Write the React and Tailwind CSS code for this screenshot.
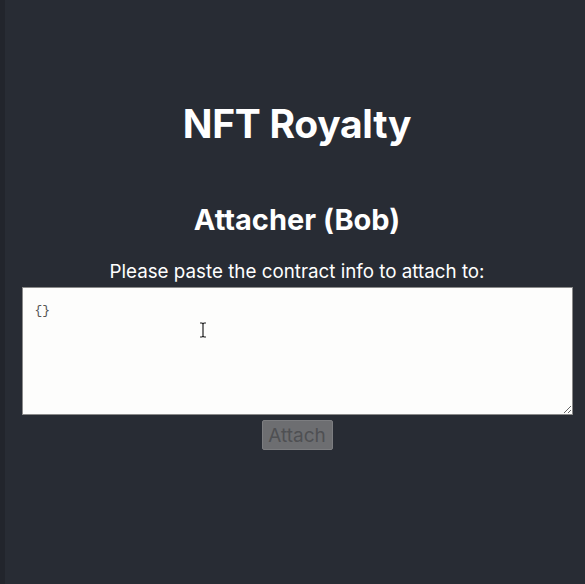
import React from 'react';

const App = () => {
  return (
    <div className="min-h-screen bg-[#282c34] text-white font-['Inter',sans-serif] relative">
      {/* left window edge */}
      <div className="absolute left-0 top-0 bottom-0 w-[5px] bg-[#22252c]" />
      <div className="flex flex-col items-center pt-[100px] pl-[9px]">
        <h1 className="text-[39px] leading-[48px] font-bold tracking-[-0.3px]">NFT Royalty</h1>
        <h2 className="mt-[54px] text-[29px] leading-[36px] font-bold">Attacher (Bob)</h2>
        <p className="mt-[22px] text-[18.8px] leading-[24px]">Please paste the contract info to attach to:</p>
        <div className="relative mt-[3px]">
          <textarea
            className="block w-[551px] h-[128px] bg-[#fdfdfc] border border-[#8a8a8a] px-[12px] py-[13px] text-[13px] text-[#555] font-['Liberation_Mono',monospace] resize-y outline-none"
            defaultValue="{}"
          />
          {/* mouse I-beam cursor */}
          <svg className="absolute left-[177px] top-[35px] pointer-events-none" width="8" height="16" viewBox="0 0 8 16">
            <path d="M1 1h2l1 1 1-1h2M4 2v12M1 15h2l1-1 1 1h2" fill="none" stroke="#222" strokeWidth="1.2" />
          </svg>
        </div>
        <button
          disabled
          className="mt-[5px] h-[30px] w-[71px] bg-[#6d6e71] border border-[#7c7d80] text-[#4f5053] text-[19px] leading-none rounded-[2px]"
        >
          Attach
        </button>
      </div>
    </div>
  );
};

export default App;
